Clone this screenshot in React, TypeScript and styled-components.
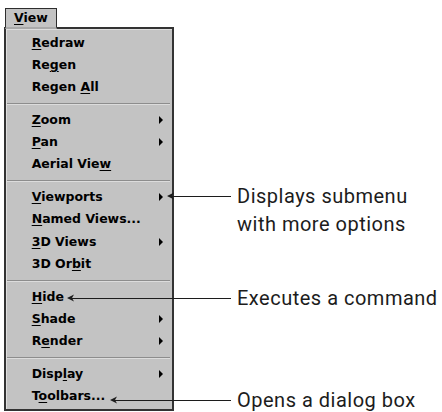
import React from "react";
import styled, { createGlobalStyle } from "styled-components";

const GlobalStyle = createGlobalStyle`
  html, body {
    margin: 0;
    padding: 0;
    background: #fff;
  }
  body {
    font-family: "DejaVu Sans", "Liberation Sans", sans-serif;
  }
`;

type MenuItem = { label: string; sub?: boolean } | "sep";

// "&" marks the mnemonic letter, like a Windows resource file
const items: MenuItem[] = [
  { label: "&Redraw" },
  { label: "Re&gen" },
  { label: "Regen &All" },
  "sep",
  { label: "&Zoom", sub: true },
  { label: "&Pan", sub: true },
  { label: "Aerial Vie&w" },
  "sep",
  { label: "&Viewports", sub: true },
  { label: "&Named Views..." },
  { label: "&3D Views", sub: true },
  { label: "3D Or&bit" },
  "sep",
  { label: "&Hide" },
  { label: "&Shade", sub: true },
  { label: "R&ender", sub: true },
  "sep",
  { label: "Disp&lay", sub: true },
  { label: "T&oolbars..." },
];

const callouts = [
  { tipX: 166.5, lineY: 196, lines: ["Displays submenu", "with more options"] },
  { tipX: 66.5, lineY: 297.5, lines: ["Executes a command"] },
  { tipX: 110, lineY: 399.5, lines: ["Opens a dialog box"] },
];

const LINE_END = 231;
const TEXT_X = 237;

const renderLabel = (label: string) => {
  const i = label.indexOf("&");
  if (i < 0) return label;
  return (
    <>
      {label.slice(0, i)}
      <Mnemonic>{label.charAt(i + 1)}</Mnemonic>
      {label.slice(i + 2)}
    </>
  );
};

const CalloutArrow = ({ length }: { length: number }) => (
  <ArrowSvg width={length} height={28} viewBox={`0 0 ${length} 28`}>
    <polygon points="0,14 7,10.5 5,14 7,17.5" fill="#1c1c1c" />
    <line x1={5} y1={14.5} x2={length} y2={14.5} stroke="#1c1c1c" strokeWidth={1} />
  </ArrowSvg>
);

export default function App() {
  return (
    <>
      <GlobalStyle />
      <Page>
        <MenuBar>
          <BarTab>{renderLabel("&View")}</BarTab>
        </MenuBar>
        <Dropdown>
          {items.map((item, idx) =>
            item === "sep" ? (
              <Separator key={idx} />
            ) : (
              <Row key={idx}>
                <span>{renderLabel(item.label)}</span>
                {item.sub && <SubArrow />}
              </Row>
            )
          )}
        </Dropdown>

        {callouts.map((c) => (
          <Callout key={c.lines[0]} style={{ left: c.tipX, top: c.lineY - 14 }}>
            <CalloutArrow length={LINE_END - c.tipX} />
            <CalloutText>
              {c.lines.map((l) => (
                <div key={l}>{l}</div>
              ))}
            </CalloutText>
          </Callout>
        ))}
      </Page>
    </>
  );
}

const Page = styled.div`
  position: relative;
  width: 442px;
  height: 412px;
  overflow: hidden;
  background: #fff;
  padding: 8px 0 0 4px;
  box-sizing: border-box;
`;

const MenuBar = styled.div`
  display: flex;
  height: 19px;
  padding-left: 1px;
`;

const BarTab = styled.div`
  position: relative;
  z-index: 1;
  width: 52px;
  height: 21px;
  box-sizing: border-box;
  border: 1px solid #2e2e2e;
  border-bottom: 2px solid #a9a9a9;
  background: #c3c3c3;
  color: #000;
  font-weight: bold;
  font-size: 12.5px;
  line-height: 18px;
  padding-left: 8px;
`;

const Dropdown = styled.div`
  width: 170px;
  box-sizing: border-box;
  border: 2px solid #333;
  background: #c3c3c3;
  box-shadow: inset 1px 1px 0 #dedede;
  padding: 2.5px 0 2px 0;
`;

const Row = styled.div`
  display: flex;
  align-items: center;
  height: 22.3px;
  padding: 0 9.5px 0 25.7px;
  font-size: 12.5px;
  font-weight: bold;
  line-height: 22px;
  color: #000;
  white-space: nowrap;
`;

const Mnemonic = styled.span`
  text-decoration: underline;
  text-decoration-thickness: 1px;
  text-underline-offset: 2px;
`;

const SubArrow = styled.span`
  margin-left: auto;
  width: 0;
  height: 0;
  border-left: 4.5px solid #000;
  border-top: 4px solid transparent;
  border-bottom: 4px solid transparent;
`;

const Separator = styled.div`
  height: 10.3px;
  display: flex;
  align-items: center;
  padding: 0 2px 0 1px;

  &::before {
    content: "";
    flex: 1;
    height: 1px;
    background: #8d8d8d;
    box-shadow: 0 1px 0 #dcdcdc;
  }
`;

const Callout = styled.div`
  position: absolute;
  z-index: 2;
  display: flex;
  align-items: flex-start;
`;

const ArrowSvg = styled.svg`
  display: block;
  flex-shrink: 0;
`;

const CalloutText = styled.div`
  margin-left: ${TEXT_X - LINE_END}px;
  font-family: Roboto, "Liberation Sans", sans-serif;
  font-size: 20px;
  line-height: 28px;
  letter-spacing: 0.5px;
  color: #1c1c1c;
  white-space: nowrap;
`;
